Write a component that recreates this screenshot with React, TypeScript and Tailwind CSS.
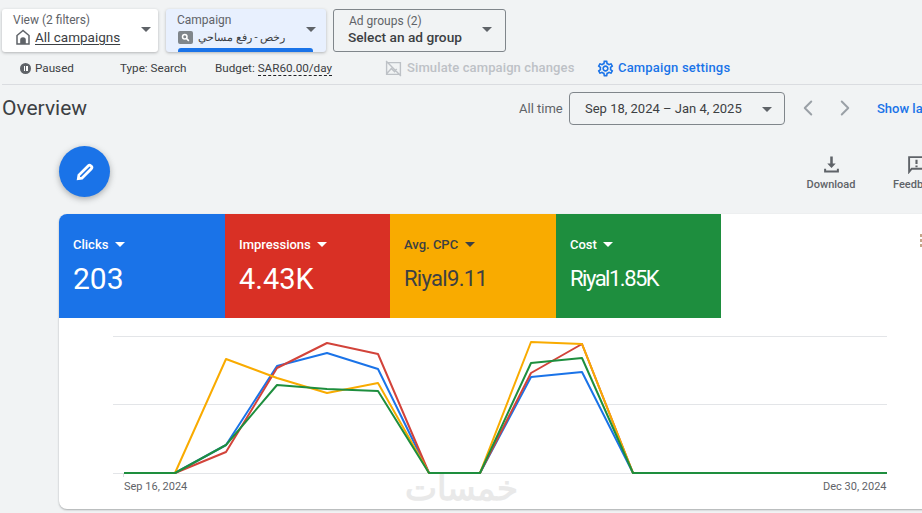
import { ChevronLeft, ChevronRight } from 'lucide-react';

const xs = [124, 175, 226, 277, 327, 378, 429, 480, 531, 582, 633, 887];

const lines = [
  { color: '#1a73e8', ys: [473, 473, 445, 366, 353, 369, 473, 473, 377, 372, 473, 473] },
  { color: '#d2433a', ys: [473, 473, 452, 368, 343, 354, 473, 473, 373, 344, 473, 473] },
  { color: '#f9ab00', ys: [473, 473, 359, 378, 393, 383, 473, 473, 342, 344, 473, 473] },
  { color: '#1e8e3e', ys: [473, 473, 445, 385, 389, 391, 473, 473, 363, 358, 473, 473] },
];

const tiles = [
  { label: 'Clicks', value: '203', bg: 'bg-[#1a73e8]', width: 'w-[166px]', text: 'text-white', size: 'text-[30px] leading-[32px]' },
  { label: 'Impressions', value: '4.43K', bg: 'bg-[#d93025]', width: 'w-[165px]', text: 'text-white', size: 'text-[29px] leading-[32px]' },
  { label: 'Avg. CPC', value: 'Riyal9.11', bg: 'bg-[#f9ab00]', width: 'w-[166px]', text: 'text-[#3c4043]', size: 'text-[22px] leading-[32px] tracking-[-0.700px]' },
  { label: 'Cost', value: 'Riyal1.85K', bg: 'bg-[#1e8e3e]', width: 'w-[165px]', text: 'text-white', size: 'text-[22px] leading-[32px] tracking-[-1.500px]' },
];

function Caret({ className }: { className: string }) {
  return <span className={`block h-0 w-0 border-x-[5px] border-t-[5px] border-x-transparent ${className}`} />;
}

function FilterBox({ className, children }: { className: string; children: React.ReactNode }) {
  return <div className={`absolute top-[9px] h-[43px] rounded-[3px] ${className}`}>{children}</div>;
}

export default function App() {
  return (
    <div className="relative h-[513px] w-[922px] overflow-hidden bg-[#f1f3f4] font-[Roboto,sans-serif] text-[#3c4043]">
      {/* Filters */}
      <FilterBox className="left-[2px] w-[156px] bg-white shadow-[0_1px_3px_rgba(60,64,67,0.35)]">
        <div className="pl-[11px] pt-[4px] text-[12px] leading-[14px] text-[#5f6368]">View (2 filters)</div>
        <div className="mt-[1px] flex items-center pl-[13px]">
          <svg viewBox="0 0 16 16" className="h-[16px] w-[16px]" fill="none" stroke="#5f6368" strokeWidth="1.500">
            <path d="M8 1.500 2 6.500v8.500h12V6.500L8 1.500Z" />
            <path d="M5.200 15v-4a2.800 2.800 0 0 1 5.600 0v4Z" fill="#5f6368" stroke="none" />
          </svg>
          <span className="ml-[4px] text-[13.500px] leading-[18px] underline underline-offset-2">All campaigns</span>
        </div>
        <Caret className="absolute left-[139px] top-[18px] border-t-[#5f6368]" />
      </FilterBox>

      <FilterBox className="left-[166px] w-[160px] overflow-hidden bg-[#e8f0fe] shadow-[0_1px_3px_rgba(60,64,67,0.35)]">
        <div className="pl-[11px] pt-[4px] text-[12px] leading-[14px] text-[#5f6368]">Campaign</div>
        <div className="mt-[3px] flex items-center pl-[12px]">
          <span className="flex h-[13px] w-[15px] items-center justify-center rounded-[2px] bg-[#80868b]">
            <svg viewBox="0 0 12 12" className="h-[9px] w-[9px]" fill="none" stroke="white" strokeWidth="2">
              <circle cx="5" cy="5" r="3" />
              <path d="m7.500 7.500 3 3" />
            </svg>
          </span>
          <span dir="rtl" className="ml-[5px] w-[90px] whitespace-nowrap text-left text-[11px] leading-[15px] text-[#3c4043]">
            رخص - رفع مساحي
          </span>
        </div>
        <Caret className="absolute left-[140px] top-[18px] border-t-[#5f6368]" />
        <div className="absolute bottom-0 left-[12px] h-[4px] w-[135px] rounded-t-[3px] bg-[#1a73e8]" />
      </FilterBox>

      <FilterBox className="left-[333px] w-[173px] border border-[#80868b]">
        <div className="pl-[15px] pt-[4px] text-[12px] leading-[14px] text-[#5f6368]">Ad groups (2)</div>
        <div className="pl-[14px] text-[13.700px] font-medium leading-[18px] text-[#3c4043]">Select an ad group</div>
        <Caret className="absolute left-[148px] top-[17px] border-t-[#5f6368]" />
      </FilterBox>

      {/* Campaign status row */}
      <div className="absolute left-0 top-[59px] flex h-[18px] w-full items-center text-[11.700px] leading-[18px]">
        <span className="absolute left-[20px] flex h-[11px] w-[11px] items-center justify-center gap-[1px] rounded-full bg-[#5f6368]">
          <span className="h-[5px] w-[1.500px] bg-white" />
          <span className="h-[5px] w-[1.500px] bg-white" />
        </span>
        <span className="absolute left-[35px]">Paused</span>
        <span className="absolute left-[120px]">Type: Search</span>
        <span className="absolute left-[215px]">
          Budget: <span className="border-b border-dashed border-[#202124] text-[#3c4043]">SAR60.00/day</span>
        </span>
        <svg viewBox="0 0 16 16" className="absolute left-[385px] h-[17px] w-[17px]" fill="none" stroke="#bdc1c6" strokeWidth="1.300">
          <path d="M1 1 15 15M1.500 2.500h13v11h-13zM1.500 13 6 8l3 3 2-2.500" />
        </svg>
        <span className="absolute left-[407px] text-[13px] font-medium tracking-[0.120px] text-[#bdc1c6]">Simulate campaign changes</span>
        <svg viewBox="0 0 24 24" className="absolute left-[596px] h-[19px] w-[19px]" fill="#1a73e8">
          <path d="M19.430 12.980c.04-.32.07-.640.07-.980s-.03-.660-.07-.980l2.110-1.650c.19-.150.240-.420.120-.640l-2-3.460c-.12-.220-.390-.300-.610-.220l-2.490 1c-.520-.400-1.080-.730-1.690-.980l-.38-2.650A.488.488 0 0 0 14 2h-4c-.250 0-.460.180-.490.420l-.38 2.650c-.610.250-1.170.590-1.690.980l-2.490-1c-.230-.090-.490 0-.610.220l-2 3.460c-.130.220-.070.490.120.640l2.110 1.650c-.040.320-.070.650-.070.980s.03.660.07.980l-2.110 1.650c-.190.150-.240.420-.120.640l2 3.460c.12.220.390.300.610.220l2.490-1c.520.400 1.080.730 1.690.980l.38 2.650c.03.240.240.420.490.420h4c.250 0 .460-.180.490-.420l.38-2.650c.610-.250 1.170-.590 1.690-.980l2.490 1c.230.090.490 0 .610-.220l2-3.460c.12-.220.070-.490-.120-.640l-2.110-1.650ZM17.450 11.270c.04.310.05.520.05.730s-.02.430-.05.730l-.14 1.130.89.700 1.080.840-.700 1.210-1.270-.510-1.040-.420-.900.680c-.430.320-.840.560-1.250.730l-1.060.430-.16 1.130-.2 1.350h-1.400l-.19-1.350-.16-1.130-1.060-.430c-.430-.180-.830-.410-1.230-.710l-.91-.700-1.060.430-1.270.510-.700-1.210 1.080-.840.890-.700-.14-1.130c-.03-.310-.05-.540-.05-.740s.02-.430.05-.730l.14-1.130-.89-.700-1.080-.840.700-1.210 1.270.510 1.040.420.900-.680c.43-.320.840-.560 1.250-.730l1.060-.430.16-1.130.2-1.350h1.390l.19 1.350.16 1.130 1.060.430c.43.180.830.410 1.230.710l.91.700 1.060-.430 1.270-.510.700 1.210-1.070.850-.89.700.14 1.130ZM12 8c-2.210 0-4 1.790-4 4s1.790 4 4 4 4-1.790 4-4-1.790-4-4-4Zm0 6c-1.100 0-2-.900-2-2s.900-2 2-2 2 .900 2 2-.900 2-2 2Z" />
        </svg>
        <span className="absolute left-[618px] text-[13px] font-medium tracking-[0.180px] text-[#1a73e8]">Campaign settings</span>
      </div>
      <div className="absolute left-[2px] right-0 top-[84px] h-px bg-[#dadce0]" />

      {/* Overview header */}
      <h1 className="absolute left-[2px] top-[96px] text-[21px] leading-[24px] text-[#3c4043]">Overview</h1>
      <span className="absolute left-[519px] top-[100px] text-[13px] leading-[18px] text-[#5f6368]">All time</span>
      <div className="absolute left-[569px] top-[92px] flex h-[33px] w-[216px] items-center rounded-[4px] border border-[#80868b] pl-[15px] text-[13px] text-[#3c4043]">
        Sep 18, 2024 – Jan 4, 2025
        <Caret className="absolute left-[192px] top-[14px] border-t-[#5f6368]" />
      </div>
      <ChevronLeft className="absolute left-[795px] top-[95px] h-[26px] w-[26px] text-[#9aa0a6]" strokeWidth={1.800} />
      <ChevronRight className="absolute left-[832px] top-[95px] h-[26px] w-[26px] text-[#9aa0a6]" strokeWidth={1.800} />
      <span className="absolute left-[877px] top-[100px] whitespace-nowrap text-[13px] font-medium leading-[18px] text-[#1a73e8]">Show last 30 days</span>

      {/* Edit button */}
      <div className="absolute left-[59px] top-[146px] flex h-[51px] w-[51px] items-center justify-center rounded-full bg-[#1a73e8] shadow-[0_2px_6px_rgba(60,64,67,0.4)]">
        <svg viewBox="0 0 18 18" className="h-[20px] w-[20px]" fill="none" stroke="white" strokeWidth="2.500">
          <path d="m3 15 .500-3.200L12 3.300a1.500 1.500 0 0 1 2.100 0l.600.600a1.500 1.500 0 0 1 0 2.100L6.200 14.500 3 15Z" />
        </svg>
      </div>

      {/* Download, feedback */}
      <div className="absolute left-[806px] top-[155px] flex w-[50px] flex-col items-center text-[11px] font-medium leading-[14px] text-[#5f6368]">
        <svg viewBox="0 0 18 18" className="h-[19px] w-[19px]" fill="#5f6368">
          <path d="M7.800 1.500h2.400v6.500h2.800L9 12.200 5 8h2.800V1.500ZM2 13h1.900v1.800h10.200V13H16v3.500H2V13Z" />
        </svg>
        <span className="mt-[4px]">Download</span>
      </div>
      <div className="absolute left-[893px] top-[155px] flex flex-col items-start text-[11px] font-medium leading-[14px] text-[#5f6368]">
        <svg viewBox="0 0 18 18" className="ml-[14px] h-[19px] w-[19px]" fill="none" stroke="#5f6368" strokeWidth="1.800">
          <path d="M2 2h14v11H4.500L2 16V2Z" />
          <path d="M9 4.500v4M9 10v1.500" strokeWidth="2" />
        </svg>
        <span className="mt-[4px] whitespace-nowrap">Feedback</span>
      </div>

      {/* Performance card */}
      <div className="absolute left-[59px] top-[214px] h-[295px] w-[900px] overflow-hidden rounded-[8px] bg-white shadow-[0_1px_2px_rgba(60,64,67,0.4)]">
        <div className="flex h-[104px]">
          {tiles.map((tile) => (
            <div key={tile.label} className={`${tile.width} ${tile.bg} ${tile.text} pl-[14px] pt-[22px]`}>
              <div className="flex items-center gap-[6.500px] text-[13px] font-medium leading-[17px]">
                {tile.label}
                <Caret
                  className={tile.text === 'text-white' ? 'border-t-white' : 'border-t-[#3c4043]'}
                />
              </div>
              <div className={`mt-[10px] ${tile.size}`}>{tile.value}</div>
            </div>
          ))}
        </div>
        <div className="absolute left-[861px] top-[20px] flex flex-col gap-[2px]">
          <span className="h-[3px] w-[2px] bg-[#c4a68a]" />
          <span className="h-[3px] w-[2px] bg-[#c4a68a]" />
          <span className="h-[3px] w-[2px] bg-[#c4a68a]" />
        </div>
        <span className="absolute left-[65px] top-[266px] text-[11px] leading-[14px] text-[#5f6368]">Sep 16, 2024</span>
        <span className="absolute left-[764px] top-[266px] text-[11px] leading-[14px] text-[#5f6368]">Dec 30, 2024</span>
        <span
          dir="rtl"
          className="absolute left-[344px] top-[254px] w-[116px] text-center font-['DejaVu_Sans',sans-serif] text-[34px] font-bold leading-[40px] text-[#e9e9e9]"
        >
          خمسات
        </span>
      </div>

      {/* Chart */}
      <svg className="absolute left-0 top-0 h-[513px] w-[922px]" viewBox="0 0 922 513" fill="none">
        <path d="M113 336.500H887M113 404.500H887M113 473.500H887" stroke="#e3e5e8" strokeWidth="1" />
        <path d="M123.500 473V477" stroke="#dadce0" strokeWidth="1" />
        {lines.map((line) => (
          <polyline
            key={line.color}
            points={line.ys.map((y, i) => `${xs[i]},${y}`).join(' ')}
            stroke={line.color}
            strokeWidth="2"
            strokeLinejoin="round"
          />
        ))}
      </svg>
    </div>
  );
}
